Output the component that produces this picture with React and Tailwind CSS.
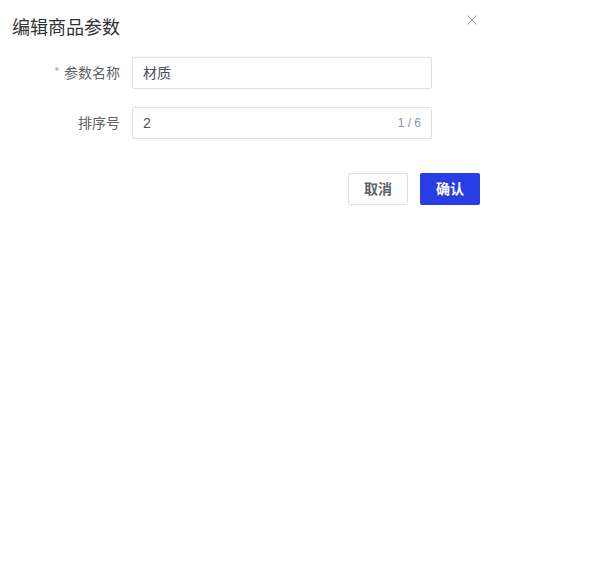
import React from 'react';

function FormRow({ label, required, children, className = '' }) {
  return (
    <div className={`flex items-center ${className}`}>
      <label className="w-[108px] text-right text-[14px] text-[#606266]">
        {required && <span className="text-[11px] text-[#f07a7a] mr-[5px] align-top">*</span>}
        {label}
      </label>
      <div className="ml-3 w-[300px]">{children}</div>
    </div>
  );
}

export default function App() {
  return (
    <div
      className="w-[593px] h-[568px] bg-white"
      style={{ fontFamily: '"Liberation Sans", "Noto Sans CJK SC", sans-serif' }}
    >
      <div className="w-[492px] px-3 pt-4">
        <div className="flex items-start justify-between">
          <h2 className="text-[18px] leading-6 text-[#303133]">编辑商品参数</h2>
          <button className="mt-[-1px] mr-[3px] text-[#909399]">
            <svg width="10" height="10" viewBox="0 0 10 10" fill="none" stroke="currentColor" strokeWidth="1">
              <path d="M0.5 0.5 L9.5 9.5 M9.5 0.5 L0.5 9.5" />
            </svg>
          </button>
        </div>

        <FormRow label="参数名称" required className="mt-[17px]">
          <div className="h-8 border border-[#dcdfe6] rounded-[2px] px-[10px] flex items-center text-[14px] text-[#4b4f57]">
            材质
          </div>
        </FormRow>

        <FormRow label="排序号" className="mt-[18px]">
          <div className="h-8 border border-[#dcdfe6] rounded-[2px] px-[10px] flex items-center justify-between text-[14px] text-[#4b4f57]">
            <span>2</span>
            <span className="text-[12px] text-[#8593ad]">1 / 6</span>
          </div>
        </FormRow>

        <div className="flex justify-end gap-3 mt-[34px]">
          <button className="w-[60px] h-8 border border-[#dcdfe6] rounded-[2px] text-[14px] font-semibold text-[#606266] bg-white">
            取消
          </button>
          <button className="w-[60px] h-8 rounded-[2px] text-[14px] font-semibold text-white bg-[#283de4]">
            确认
          </button>
        </div>
      </div>
    </div>
  );
}
